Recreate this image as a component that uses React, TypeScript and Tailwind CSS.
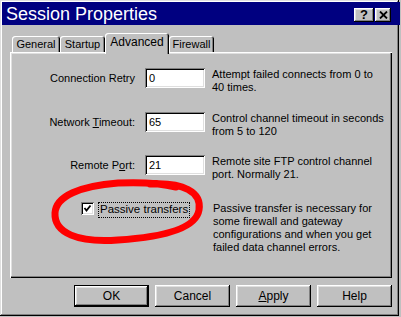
import React from "react";

const raised =
  "shadow-[inset_-1px_-1px_#000,inset_1px_1px_#fff,inset_-2px_-2px_#808080,inset_2px_2px_#dfdfdf]";
const sunken =
  "shadow-[inset_1px_1px_#808080,inset_-1px_-1px_#fff,inset_2px_2px_#000,inset_-2px_-2px_#dfdfdf]";

const Field = ({ value }: { value: string }) => (
  <div className={`w-[60px] h-[20px] bg-white flex items-center pl-[4px] ${sunken}`}>{value}</div>
);

const Row = ({
  label,
  value,
  desc,
  className,
}: {
  label: React.ReactNode;
  value: string;
  desc: React.ReactNode;
  className?: string;
}) => (
  <div className={`flex items-start ${className ?? ""}`}>
    <div className="w-[135px] h-[20px] flex items-center justify-end pr-[10px] whitespace-nowrap">
      <span>{label}</span>
    </div>
    <Field value={value} />
    <div className="ml-[7px] leading-[13px] whitespace-nowrap">{desc}</div>
  </div>
);

const Tab = ({ label, w, active }: { label: string; w: string; active?: boolean }) => (
  <div
    className={`${w} flex items-center justify-center rounded-t-[3px] bg-[#c0c0c0] shadow-[inset_1px_1px_#fff,inset_-1px_0_#000,inset_-2px_0_#808080] ${
      active ? "h-[21px] -mb-[2px] z-10 pb-[3px] text-[12px]" : "h-[16px] pt-[1px]"
    }`}
  >
    {label}
  </div>
);

const Button = ({ children, isDefault }: { children: React.ReactNode; isDefault?: boolean }) => (
  <div className={`w-[75px] h-[22px] ${isDefault ? "border border-black" : ""}`}>
    <div className={`w-full h-full flex items-center justify-center ${raised} text-[12px]`}>
      <span>{children}</span>
    </div>
  </div>
);

export default function App() {
  return (
    <div className="relative w-[401px] h-[317px] overflow-hidden bg-[#c0c0c0] text-[11px] text-black font-['Liberation_Sans',Arial,sans-serif]">
      <div className="w-[399px] h-[316px] p-[2px] flex flex-col shadow-[inset_-1px_-1px_#000,inset_1px_1px_#dfdfdf,inset_-2px_-2px_#808080,inset_2px_2px_#fff]">
        {/* title bar */}
        <div className="h-[23px] -mr-[3px] bg-[#000080] flex items-center justify-between pl-[4px] pr-[9px]">
          <span className="text-white text-[18px] leading-none">Session Properties</span>
          <div className="flex gap-[1px] mt-[2px]">
            <div className={`w-[20px] h-[14px] bg-[#c0c0c0] flex items-center justify-center font-bold text-[13px] leading-none ${raised}`}>
              ?
            </div>
            <div className={`w-[16px] h-[14px] bg-[#c0c0c0] flex items-center justify-center ${raised}`}>
              <svg width="9" height="8" viewBox="0 0 9 8">
                <path d="M1 0.5 L8 7.5 M8 0.5 L1 7.5" stroke="#000" strokeWidth="1.8" />
              </svg>
            </div>
          </div>
        </div>

        {/* tabs */}
        <div className="ml-[10px] mt-[8px] flex items-end">
          <Tab label="General" w="w-[48px]" />
          <Tab label="Startup" w="w-[45px]" />
          <Tab label="Advanced" w="w-[64px]" active />
          <Tab label="Firewall" w="w-[45px]" />
        </div>

        {/* panel */}
        <div className="ml-[8px] w-[382px] h-[226px] pt-[16px] flex flex-col shadow-[inset_1px_1px_#fff,inset_-1px_-1px_#000,inset_-2px_-2px_#808080,inset_2px_2px_#dfdfdf]">
          <Row
            label="Connection Retry"
            value="0"
            desc={
              <>
                Attempt failed connects from 0 to
                <br />
                40 times.
              </>
            }
          />
          <Row
            className="mt-[18px]"
            label={
              <>
                Network <u>T</u>imeout:
              </>
            }
            value="65"
            desc={
              <>
                Control channel timeout in seconds
                <br />
                from 5 to 120
              </>
            }
          />
          <Row
            className="mt-[17px]"
            label={
              <>
                Remote P<u>o</u>rt:
              </>
            }
            value="21"
            desc={
              <>
                Remote site FTP control channel
                <br />
                port. Normally 21.
              </>
            }
          />
          <div className="mt-[21px] flex items-start">
            <div className="w-[195px] flex items-start">
              <div className={`ml-[71px] w-[13px] h-[13px] bg-white flex items-center justify-center ${sunken}`}>
                <svg width="9" height="9" viewBox="0 0 9 9">
                  <path d="M1.5 4 L3.5 6.5 L7.5 1.5" fill="none" stroke="#000" strokeWidth="1.8" />
                </svg>
              </div>
              <div className="ml-[4px] h-[16px] px-[1px] border border-dotted border-black flex items-center whitespace-nowrap text-[11.5px]">
                Passive transfers
              </div>
            </div>
            <div className="ml-[8px] leading-[13px] whitespace-nowrap">
              Passive transfer is necessary for
              <br />
              some firewall and gateway
              <br />
              configurations and when you get
              <br />
              failed data channel errors.
            </div>
          </div>
        </div>

        {/* buttons */}
        <div className="ml-[8px] w-[382px] mt-[7px] flex justify-end gap-[6px]">
          <Button isDefault>OK</Button>
          <Button>Cancel</Button>
          <Button>
            <u>A</u>pply
          </Button>
          <Button>Help</Button>
        </div>
      </div>

      {/* red marker annotation */}
      <svg className="absolute inset-0 pointer-events-none" width="401" height="317" viewBox="0 0 401 317">
        <path
          d="M150 184 C183 182 202 192 199 210 C196 228 165 237 118 240 C78 243 54 233 55 213 C56 196 80 186 118 183 C140 182 160 183 176 187"
          fill="none"
          stroke="#ff0000"
          strokeWidth="7"
          strokeLinecap="round"
        />
      </svg>
    </div>
  );
}
